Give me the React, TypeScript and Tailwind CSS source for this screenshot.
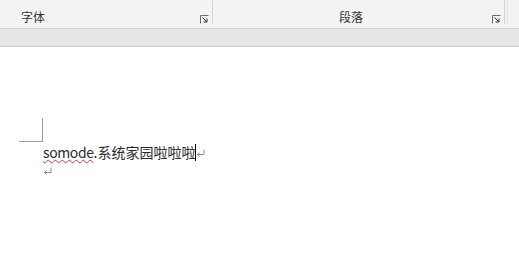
const font = { fontFamily: '"Noto Sans CJK SC", "Liberation Sans", sans-serif' };

function Launcher() {
  return (
    <svg width="9" height="9" viewBox="0 0 9 9" className="block">
      <path d="M0.5 8.5 V0.5 H8.5" fill="none" stroke="#6b6b6b" strokeWidth="1" />
      <path d="M2.5 2.5 L7 7 M7 3.5 V7 H3.5" fill="none" stroke="#333" strokeWidth="1" />
    </svg>
  );
}

function ReturnMark() {
  return (
    <svg width="9" height="8" viewBox="0 0 9 8" className="block shrink-0">
      <path d="M8 0.5 V5.5 H1.5 M3.5 3.5 L1.5 5.5 L3.5 7.5" fill="none" stroke="#8a8a8a" strokeWidth="1" />
    </svg>
  );
}

export default function App() {
  return (
    <div className="w-[519px] h-[267px] bg-white overflow-hidden" style={font}>
      {/* ribbon */}
      <div className="flex h-[29px] bg-[#f3f3f3] border-b border-[#d5d5d5]">
        <div className="relative w-[212px] flex items-start">
          <span className="mt-[9px] ml-[21px] text-[12px] leading-[16px] text-[#333]">字体</span>
          <div className="absolute left-[200px] top-[15px]">
            <Launcher />
          </div>
        </div>
        <div className="w-px h-[24px] bg-[#d4d4d4]" />
        <div className="relative w-[291px] flex items-start">
          <span className="mt-[9px] ml-[126px] text-[12px] leading-[16px] text-[#333]">段落</span>
          <div className="absolute left-[279px] top-[15px]">
            <Launcher />
          </div>
        </div>
        <div className="w-px h-[24px] bg-[#d4d4d4]" />
        <div className="w-[2px]" />
        <div className="w-px h-[24px] bg-[#e2e2e2]" />
      </div>
      {/* gray band */}
      <div className="h-[18px] bg-[#e6e6e6] border-b border-[#c6c6c6]" />
      {/* document */}
      <div className="pt-[71px]">
        <div className="ml-[19px] w-[24px] h-[24px] border-r border-b border-[#9c9c9c]" />
        <div className="pl-[43px] mt-[1px] flex items-center h-[19px] text-[14px] leading-[19px] text-[#2a2a2a]">
          <span className="underline decoration-wavy decoration-[#e03030] decoration-1 underline-offset-[1px] tracking-[-0.4px]">somode</span>
          <span>.系统家园啦啦啦</span>
          <span className="w-px h-[17px] bg-black" />
          <ReturnMark />
        </div>
        <div className="pl-[43px] mt-[5px] flex h-[8px]">
          <ReturnMark />
        </div>
      </div>
    </div>
  );
}
